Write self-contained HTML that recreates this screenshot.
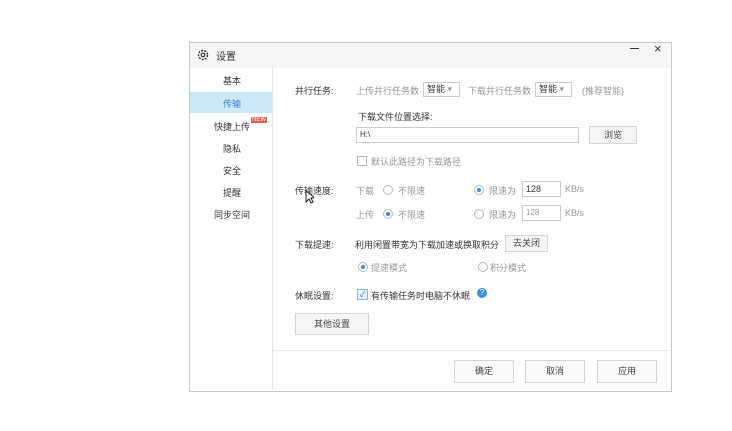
<!DOCTYPE html><html><head><meta charset="utf-8"><style>
body{margin:0;width:732px;height:431px;background:#fff;position:relative;font-family:"Liberation Sans","Noto Sans CJK SC",sans-serif;font-size:9px;color:#333;overflow:hidden}
.a{position:absolute;white-space:nowrap}
.win{left:189px;top:42px;width:481px;height:348px;border:1px solid #c8c8c8;background:#fff}
.g{color:#999}
.btn{position:absolute;border:1px solid #d6d6d6;background:#f5f5f5;text-align:center;color:#444}
.rad{position:absolute;width:8px;height:8px;border:1px solid #bbb;border-radius:50%;background:#fff}
.rad.on::after{content:"";position:absolute;left:2px;top:2px;width:4px;height:4px;border-radius:50%;background:#3a8ee6}
.sel{position:absolute;border:1px solid #ccc;background:#fff;height:13px;line-height:13px;padding-left:3px;font-size:9px}
.inp{position:absolute;border:1px solid #ccc;background:#fff;height:14px;line-height:14px;padding-left:3px}
</style></head><body>
<div class="a win"></div>
<div class="a" style="left:190px;top:43px;width:480px;height:25px;background:#f6f6f6"></div>
<svg class="a" style="left:197px;top:49px" width="12" height="12" viewBox="0 0 12 12"><circle cx="6" cy="6" r="4.5" fill="none" stroke="#333" stroke-width="1.4" stroke-dasharray="2 1.2"/><circle cx="6" cy="6" r="1.8" fill="none" stroke="#333" stroke-width="1.2"/></svg>
<div class="a" style="left:216px;top:48px;font-size:10px">设置</div>
<div class="a" style="left:630px;top:48px;width:9px;height:1px;background:#333"></div>
<div class="a" style="left:654px;top:41px;font-size:13px">×</div>
<div class="a" style="left:272px;top:68px;width:1px;height:322px;background:#e6e6e6"></div>
<div class="a" style="left:190px;top:92px;width:82px;height:21px;background:#cde8f7"></div>
<div class="a" style="left:223px;top:74px">基本</div>
<div class="a" style="left:223px;top:97px;color:#3a7fd0">传输</div>
<div class="a" style="left:214px;top:120px">快捷上传</div>
<div class="a" style="left:251px;top:117px;background:#e85a4f;color:#fff;font-size:6px;padding:0 1px">NEW</div>
<div class="a" style="left:223px;top:142px">隐私</div>
<div class="a" style="left:223px;top:164px">安全</div>
<div class="a" style="left:223px;top:186px">提醒</div>
<div class="a" style="left:214px;top:208px">同步空间</div>

<div class="a" style="left:295px;top:84px">并行任务:</div>
<div class="a g" style="left:356px;top:84px">上传并行任务数</div>
<div class="sel" style="left:423px;top:82px;width:32px">智能 <span class="g">▾</span></div>
<div class="a g" style="left:468px;top:84px">下载并行任务数</div>
<div class="sel" style="left:535px;top:82px;width:32px">智能 <span class="g">▾</span></div>
<div class="a g" style="left:582px;top:84px">(推荐智能)</div>
<div class="a" style="left:358px;top:110px">下载文件位置选择:</div>
<div class="inp" style="left:356px;top:127px;width:218px;font-size:8px">H:\</div>
<div class="btn g" style="left:589px;top:126px;width:46px;height:16px;line-height:16px">浏览</div>
<div class="a" style="left:357px;top:156px;width:8px;height:8px;border:1px solid #bbb"></div>
<div class="a g" style="left:371px;top:155px">默认此路径为下载路径</div>

<div class="a" style="left:295px;top:184px">传输速度:</div>
<div class="a g" style="left:356px;top:184px">下载</div>
<div class="rad" style="left:383px;top:185px"></div>
<div class="a g" style="left:398px;top:184px">不限速</div>
<div class="rad on" style="left:474px;top:185px"></div>
<div class="a g" style="left:489px;top:184px">限速为</div>
<div class="inp" style="left:522px;top:181px;width:34px">128</div>
<div class="a g" style="left:565px;top:184px">KB/s</div>
<div class="a g" style="left:356px;top:208px">上传</div>
<div class="rad on" style="left:383px;top:209px"></div>
<div class="a g" style="left:398px;top:208px">不限速</div>
<div class="rad" style="left:474px;top:209px"></div>
<div class="a g" style="left:489px;top:208px">限速为</div>
<div class="inp g" style="left:522px;top:205px;width:34px;font-size:8px">128</div>
<div class="a g" style="left:565px;top:208px">KB/s</div>
<svg class="a" style="left:305px;top:190px" width="9" height="14"><path d="M1 1v11l3-3 2 4 2-1-2-4h4z" fill="#fff" stroke="#222" stroke-width="1"/></svg>

<div class="a" style="left:295px;top:238px">下载提速:</div>
<div class="a" style="left:355px;top:238px">利用闲置带宽为下载加速或换取积分</div>
<div class="btn" style="left:505px;top:235px;width:41px;height:15px;line-height:15px">去关闭</div>
<div class="rad on" style="left:358px;top:262px"></div>
<div class="a g" style="left:371px;top:261px">提速模式</div>
<div class="rad" style="left:478px;top:262px"></div>
<div class="a g" style="left:490px;top:261px">积分模式</div>
<div class="a" style="left:295px;top:289px">休眠设置:</div>
<div class="a" style="left:357px;top:289px;width:9px;height:9px;border:1px solid #8bb8e0;background:#e8f2fb;color:#2a6fc0;font-size:8px;line-height:9px;text-align:center">✓</div>
<div class="a" style="left:371px;top:289px">有传输任务时电脑不休眠</div>
<div class="a" style="left:477px;top:288px;width:10px;height:10px;border-radius:50%;background:#3d8ee0;color:#fff;font-size:8px;line-height:10px;text-align:center">?</div>
<div class="btn" style="left:295px;top:313px;width:72px;height:20px;line-height:20px">其他设置</div>
<div class="a" style="left:273px;top:350px;width:397px;height:1px;background:#ececec"></div>
<div class="btn" style="left:454px;top:360px;width:58px;height:21px;line-height:21px;background:#fafafa">确定</div>
<div class="btn" style="left:525px;top:360px;width:58px;height:21px;line-height:21px;background:#fafafa">取消</div>
<div class="btn" style="left:597px;top:360px;width:58px;height:21px;line-height:21px;background:#fafafa">应用</div>
</body></html>
